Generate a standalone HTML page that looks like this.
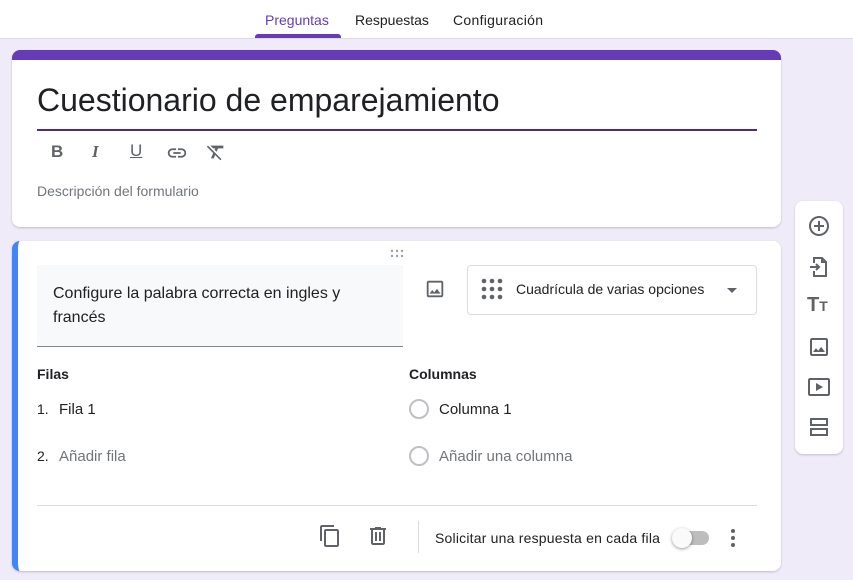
<!DOCTYPE html>
<html><head><meta charset="utf-8"><style>
*{box-sizing:border-box;margin:0;padding:0}
body{width:853px;height:580px;overflow:hidden;background:#f0ebf8;font-family:"Liberation Sans",Roboto,sans-serif;position:relative;color:#202124}
.top{position:absolute;left:0;top:0;width:853px;height:39px;background:#fff;border-bottom:1px solid #dadce0}
.tab{position:absolute;top:12px;font-size:14px;color:#202124}
.card{position:absolute;background:#fff;border-radius:8px;box-shadow:0 1px 2px rgba(0,0,0,.2)}
.ic{position:absolute}
.t{position:absolute;white-space:nowrap}
</style></head><body>
<div class="top">
<div class="tab" style="left:265px;color:#673ab7">Preguntas</div>
<div class="tab" style="left:355px">Respuestas</div>
<div class="tab" style="left:453px;letter-spacing:0.3px">Configuración</div>
<div style="position:absolute;left:255px;top:34px;width:86px;height:4px;background:#673ab7;border-radius:3px 3px 0 0"></div>
</div>

<div class="card" style="left:12px;top:50px;width:769px;height:177px;overflow:hidden">
<div style="height:10px;background:#673ab7"></div>
<div class="t" style="left:25px;top:32px;font-size:32px;color:#202124">Cuestionario de emparejamiento</div>
<div style="position:absolute;left:25px;top:79px;width:720px;height:2px;background:#4a2a8a"></div>
<div class="t" style="left:39px;top:92px;font-size:17px;font-weight:bold;color:#5f6368">B</div>
<div class="t" style="left:80px;top:92px;font-size:17px;font-style:italic;font-weight:bold;color:#5f6368;font-family:'Liberation Serif',serif">I</div>
<div class="t" style="left:118px;top:91px;font-size:17px;text-decoration:underline;color:#5f6368">U</div>
<svg class="ic" style="left:154px;top:92px" width="22" height="22" viewBox="0 0 24 24"><path fill="#5f6368" d="M3.9 12c0-1.7 1.4-3.1 3.1-3.1h4V7H7c-2.8 0-5 2.2-5 5s2.2 5 5 5h4v-1.9H7c-1.7 0-3.1-1.4-3.1-3.1zM8 13h8v-2H8v2zm9-6h-4v1.9h4c1.7 0 3.1 1.4 3.1 3.1s-1.4 3.1-3.1 3.1h-4V17h4c2.8 0 5-2.2 5-5s-2.2-5-5-5z"/></svg>
<svg class="ic" style="left:193px;top:91px" width="22" height="22" viewBox="0 0 24 24"><path fill="#5f6368" d="M3.27 5L2 6.27l6.97 6.97L6.5 19h3l1.57-3.66L16.73 21 18 19.73 3.55 5.27 3.27 5zM6 5v.18L8.82 8h2.4l-.72 1.68 2.1 2.1L14.21 8H20V5H6z"/></svg>
<div class="t" style="left:25px;top:133px;font-size:14px;color:#70757a">Descripción del formulario</div>
</div>

<div class="card" style="left:12px;top:241px;width:769px;height:330px;border-left:6px solid #4285f4">
<svg class="ic" style="left:372px;top:8px" width="14" height="9" viewBox="0 0 14 9"><g fill="#9aa0a6"><circle cx="2" cy="2" r="1.2"/><circle cx="7" cy="2" r="1.2"/><circle cx="12" cy="2" r="1.2"/><circle cx="2" cy="7" r="1.2"/><circle cx="7" cy="7" r="1.2"/><circle cx="12" cy="7" r="1.2"/></g></svg>
<div style="position:absolute;left:19px;top:24px;width:366px;height:82px;background:#f8f9fa;border-bottom:1px solid #80868b"></div>
<div class="t" style="left:35px;top:41px;font-size:16px;line-height:24px;color:#202124">Configure la palabra correcta en ingles y<br>francés</div>
<svg class="ic" style="left:406px;top:37px" width="22" height="22" viewBox="0 0 24 24"><path fill="#5f6368" d="M19 5v14H5V5h14m0-2H5c-1.1 0-2 .9-2 2v14c0 1.1.9 2 2 2h14c1.1 0 2-.9 2-2V5c0-1.1-.9-2-2-2zm-4.86 8.86l-3 3.87L9 13.14 6 17h12l-3.86-5.14z"/></svg>
<div style="position:absolute;left:449px;top:24px;width:290px;height:50px;border:1px solid #dadce0;border-radius:4px"></div>
<svg class="ic" style="left:462px;top:36px" width="24" height="24" viewBox="0 0 24 24"><g fill="#5f6368"><circle cx="4" cy="4" r="2.3"/><circle cx="12" cy="4" r="2.3"/><circle cx="20" cy="4" r="2.3"/><circle cx="4" cy="12" r="2.3"/><circle cx="12" cy="12" r="2.3"/><circle cx="20" cy="12" r="2.3"/><circle cx="4" cy="20" r="2.3"/><circle cx="12" cy="20" r="2.3"/><circle cx="20" cy="20" r="2.3"/></g></svg>
<div class="t" style="left:498px;top:40px;font-size:14px;color:#202124">Cuadrícula de varias opciones</div>
<div style="position:absolute;left:709px;top:47px;border-left:5px solid transparent;border-right:5px solid transparent;border-top:5px solid #5f6368"></div>
<div class="t" style="left:19px;top:125px;font-size:14px;font-weight:bold">Filas</div>
<div class="t" style="left:391px;top:125px;font-size:14px;font-weight:bold">Columnas</div>
<div class="t" style="left:19px;top:160px;font-size:14px">1.</div>
<div class="t" style="left:41px;top:160px;font-size:15px">Fila 1</div>
<div class="t" style="left:19px;top:207px;font-size:14px">2.</div>
<div class="t" style="left:41px;top:207px;font-size:15px;color:#70757a">Añadir fila</div>
<div style="position:absolute;left:391px;top:158px;width:20px;height:20px;border:2px solid #bdc1c6;border-radius:50%"></div>
<div class="t" style="left:421px;top:160px;font-size:15px">Columna 1</div>
<div style="position:absolute;left:391px;top:205px;width:20px;height:20px;border:2px solid #bdc1c6;border-radius:50%"></div>
<div class="t" style="left:421px;top:207px;font-size:15px;color:#70757a">Añadir una columna</div>
<div style="position:absolute;left:19px;top:264px;width:720px;height:1px;background:#dadce0"></div>
<svg class="ic" style="left:300px;top:283px" width="24" height="24" viewBox="0 0 24 24"><path fill="#5f6368" d="M16 1H4c-1.1 0-2 .9-2 2v14h2V3h12V1zm3 4H8c-1.1 0-2 .9-2 2v14c0 1.1.9 2 2 2h11c1.1 0 2-.9 2-2V7c0-1.1-.9-2-2-2zm0 16H8V7h11v14z"/></svg>
<svg class="ic" style="left:348px;top:283px" width="24" height="24" viewBox="0 0 24 24"><path fill="#5f6368" d="M15 4V3H9v1H4v2h1v13c0 1.1.9 2 2 2h10c1.1 0 2-.9 2-2V6h1V4h-5zm2 15H7V6h10v13zM9 8h2v9H9zm4 0h2v9h-2z"/></svg>
<div style="position:absolute;left:400px;top:280px;width:1px;height:32px;background:#dadce0"></div>
<div class="t" style="left:417px;top:289px;font-size:14px;letter-spacing:0.2px">Solicitar una respuesta en cada fila</div>
<div style="position:absolute;left:658px;top:290px;width:33px;height:14px;border-radius:7px;background:#bdbdbd"></div>
<div style="position:absolute;left:654px;top:287px;width:20px;height:20px;border-radius:50%;background:#fafafa;box-shadow:0 1px 3px rgba(0,0,0,.4)"></div>
<svg class="ic" style="left:703px;top:285px" width="24" height="24" viewBox="0 0 24 24"><g fill="#5f6368"><circle cx="12" cy="5" r="2"/><circle cx="12" cy="12" r="2"/><circle cx="12" cy="19" r="2"/></g></svg>
</div>

<div class="card" style="left:795px;top:201px;width:48px;height:253px">
<svg class="ic" style="left:12px;top:13px" width="24" height="24" viewBox="0 0 24 24"><path fill="#5f6368" d="M13 7h-2v4H7v2h4v4h2v-4h4v-2h-4V7zm-1-5C6.48 2 2 6.48 2 12s4.48 10 10 10 10-4.48 10-10S17.52 2 12 2zm0 18c-4.41 0-8-3.59-8-8s3.59-8 8-8 8 3.59 8 8-3.590 8-8 8z"/></svg>
<svg class="ic" style="left:12px;top:54px" width="24" height="24" viewBox="0 0 24 24"><path fill="none" stroke="#5f6368" stroke-width="2" d="M7 8V3h8l4 4v14H7v-5M15 3v4h4M3 12h9M9 9l3 3-3 3"/></svg>
<div class="t" style="left:12px;top:93px;font-size:20px;font-weight:bold;color:#5f6368">T<span style="font-size:14px">T</span></div>
<svg class="ic" style="left:12px;top:134px" width="24" height="24" viewBox="0 0 24 24"><path fill="#5f6368" d="M19 5v14H5V5h14m0-2H5c-1.1 0-2 .9-2 2v14c0 1.1.9 2 2 2h14c1.1 0 2-.9 2-2V5c0-1.1-.9-2-2-2zm-4.86 8.86l-3 3.87L9 13.14 6 17h12l-3.86-5.14z"/></svg>
<svg class="ic" style="left:12px;top:174px" width="24" height="24" viewBox="0 0 24 24"><path fill="#5f6368" d="M21 3H3c-1.1 0-2 .9-2 2v14c0 1.1.9 2 2 2h18c1.1 0 2-.9 2-2V5c0-1.1-.9-2-2-2zm0 16H3V5h18v14zM9 8v8l7-4z"/></svg>
<svg class="ic" style="left:12px;top:214px" width="24" height="24" viewBox="0 0 24 24"><path fill="none" stroke="#5f6368" stroke-width="2" d="M4 4h16v6H4zM4 14h16v6H4z"/></svg>
</div>
</body></html>
